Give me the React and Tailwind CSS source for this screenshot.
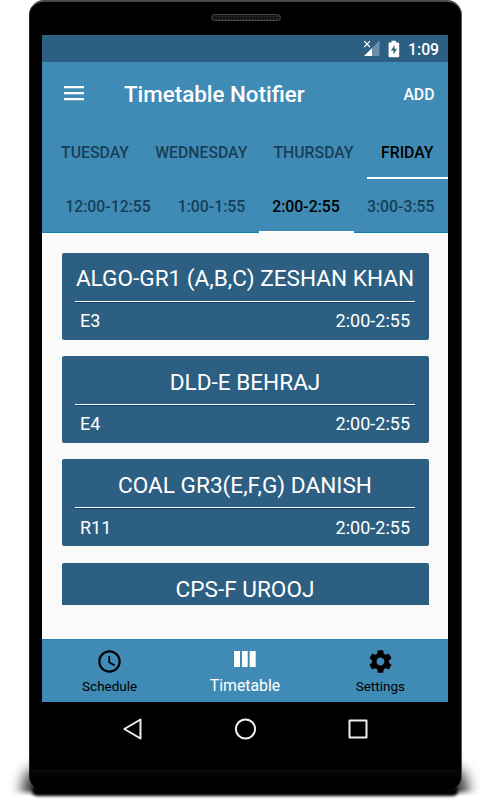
import React, { useState } from "react";
import clsx from "clsx";

const days = [
  { label: "TUESDAY", size: "w-[94px]" },
  { label: "WEDNESDAY", size: "w-[118.5px]" },
  { label: "THURSDAY", size: "w-[106px]" },
  { label: "FRIDAY", size: "w-[81.5px]" },
];

const slots = [
  { label: "12:00-12:55", size: "w-[113px]" },
  { label: "1:00-1:55", size: "w-[94px]" },
  { label: "2:00-2:55", size: "w-[95px]" },
  { label: "3:00-3:55", size: "w-[94.5px]" },
];

const classes = [
  { title: "ALGO-GR1 (A,B,C) ZESHAN KHAN", room: "E3", time: "2:00-2:55" },
  { title: "DLD-E BEHRAJ", room: "E4", time: "2:00-2:55" },
  { title: "COAL GR3(E,F,G) DANISH", room: "R11", time: "2:00-2:55" },
  { title: "CPS-F UROOJ" },
];

function StatusBar() {
  return (
    <div className="flex h-[27px] shrink-0 items-center justify-end bg-[#2d5f82] pr-[9px] text-white">
      <svg width="17" height="17" viewBox="0 0 17 17" className="mr-[8px]">
        <path d="M16.5 0.5V16H9V8z" fill="#fff" fillOpacity=".3" />
        <path d="M1 16L9 8V16z" fill="#fff" />
        <path d="M1.2 1.2L7 7M7 1.2L1.2 7" stroke="#fff" strokeWidth="1.2" />
      </svg>
      <svg width="12" height="18" viewBox="0 0 12 18" className="mr-[8px]">
        <path d="M3.5 0.7h4.5v1.8h2.2q1 0 1 1V16.3q0 1-1 1H1.6q-1 0-1-1V3.5q0-1 1-1h1.9z" fill="#fff" />
        <path d="M6.8 5L2.9 10.6h2.6V14.5L9 8.8H6.4z" fill="#2d5f82" />
      </svg>
      <span className="w-[31px] pt-[2px] text-[15.8px] leading-none font-medium whitespace-nowrap">1:09</span>
    </div>
  );
}

function TabRow({ tabs, active, onSelect, className }) {
  return (
    <div className={clsx("flex h-[54px]", className)}>
      {tabs.map((tab) => (
        <button
          key={tab.label}
          onClick={() => onSelect(tab.label)}
          className={clsx(
            "flex shrink-0 items-center justify-center border-b-2 pt-[4px] text-[15.8px] font-medium whitespace-nowrap",
            tab.size,
            active === tab.label
              ? "border-white text-black"
              : "border-transparent text-[#173f56]"
          )}
        >
          {tab.label}
        </button>
      ))}
    </div>
  );
}

function ClassCard({ item }) {
  return (
    <div className="mb-[16.3px] h-[87px] shrink-0 rounded-[2px] bg-[#2d5f82] px-[13.5px] text-white">
      <div
        className={clsx(
          "flex h-[49px] items-center justify-center pt-[5px] text-[22.6px] whitespace-nowrap",
          item.room && "border-b border-white shadow-[0_1px_0_#123f6c]"
        )}
      >
        {item.title}
      </div>
      {item.room && (
        <div className="flex h-[38px] items-center justify-between px-[5px] text-[18px]">
          <span>{item.room}</span>
          <span>{item.time}</span>
        </div>
      )}
    </div>
  );
}

function BottomNav() {
  return (
    <div className="grid h-[63px] shrink-0 grid-cols-3 border-t border-[#2880aa] bg-[#408bb6] text-black">
      <div className="flex flex-col items-center pt-[8px]">
        <svg width="27" height="27" viewBox="0 0 24 24">
          <path
            d="M11.99 2C6.47 2 2 6.48 2 12s4.47 10 9.99 10C17.52 22 22 17.52 22 12S17.52 2 11.99 2zM12 20c-4.42 0-8-3.58-8-8s3.58-8 8-8 8 3.58 8 8-3.58 8-8 8zm.5-13H11v6l5.25 3.15.75-1.23-4.5-2.67z"
          />
        </svg>
        <span className="mt-[3px] text-[13.5px] leading-[16px]">Schedule</span>
      </div>
      <div className="flex flex-col items-center pt-[11px] text-white">
        <svg width="22" height="16" viewBox="0 0 22 16" fill="currentColor">
          <path d="M0 0h6v16H0zM8 0h5.7v16H8zM15.7 0h6v16h-6z" />
        </svg>
        <span className="mt-[10px] text-[15.8px] leading-[18px]">Timetable</span>
      </div>
      <div className="flex flex-col items-center pt-[8px]">
        <svg width="27" height="27" viewBox="0 0 24 24">
          <path d="M19.43 12.98c.04-.32.07-.64.07-.98s-.03-.66-.07-.98l2.11-1.65c.19-.15.24-.42.12-.64l-2-3.46c-.12-.22-.39-.3-.61-.22l-2.49 1c-.52-.4-1.08-.73-1.69-.98l-.38-2.65C14.46 2.18 14.25 2 14 2h-4c-.25 0-.46.18-.49.42l-.38 2.65c-.61.25-1.17.59-1.69.98l-2.49-1c-.23-.09-.49 0-.61.22l-2 3.46c-.13.22-.07.49.12.64l2.11 1.65c-.04.32-.07.65-.07.98s.03.66.07.98l-2.11 1.65c-.19.15-.24.42-.12.64l2 3.46c.12.22.39.3.61.22l2.49-1c.52.4 1.08.73 1.69.98l.38 2.65c.03.24.24.42.49.42h4c.25 0 .46-.18.49-.42l.38-2.65c.61-.25 1.17-.59 1.69-.98l2.49 1c.23.09.49 0 .61-.22l2-3.46c.12-.22.07-.49-.12-.64l-2.11-1.65zM12 15.5c-1.93 0-3.5-1.57-3.5-3.5s1.57-3.5 3.5-3.5 3.5 1.57 3.5 3.5-1.57 3.5-3.5 3.5z" />
        </svg>
        <span className="mt-[3px] text-[13.5px] leading-[16px]">Settings</span>
      </div>
    </div>
  );
}

function SystemNav() {
  return (
    <div className="flex h-[67px] justify-between px-[79px] pt-[15px]">
      <svg width="24" height="24" viewBox="0 0 24 24" fill="none" stroke="#eee" strokeWidth="2" strokeLinejoin="round">
        <path d="M19.5 2.5V21.5L3.3 12z" />
      </svg>
      <svg width="24" height="24" viewBox="0 0 24 24" fill="none" stroke="#eee" strokeWidth="2">
        <circle cx="11.5" cy="12" r="9.6" />
      </svg>
      <svg width="24" height="24" viewBox="0 0 24 24" fill="none" stroke="#eee" strokeWidth="2" strokeLinejoin="round">
        <path d="M3.5 3.5h17v17h-17z" />
      </svg>
    </div>
  );
}

export default function App() {
  const [day, setDay] = useState("FRIDAY");
  const [slot, setSlot] = useState("2:00-2:55");

  return (
    <div className="relative h-[800px] w-[490px] overflow-hidden bg-white pl-[29px] font-['Roboto',sans-serif]">
      {/* soft shadow under the phone */}
      <div className="absolute top-[750px] left-[2px] h-[46px] w-[486px] overflow-hidden [mask-image:linear-gradient(to_bottom,black_85%,transparent)]">
        <div className="absolute top-[18px] left-[21px] h-[50px] w-[444px] rounded-[16px] bg-black/80 blur-[7px]" />
      </div>
      <div className="absolute top-[786px] left-[32px] h-[10px] w-[426px] rounded-full bg-black blur-[1.5px]" />

      <div className="relative h-[791px] w-[433px] overflow-hidden rounded-[15px] border-x border-t-2 border-t-[#494949] border-r-[#555] border-l-[#222] bg-black px-[12px]">
        <div className="flex h-[33px] justify-center pt-[12px]">
          <div className="h-[7px] w-[70px] rounded-full border border-[#464646] bg-[radial-gradient(#3a3a3a_1px,#151515_1px)] bg-[size:3px_3px]" />
        </div>

        <div className="flex h-[667px] w-[406px] flex-col overflow-hidden bg-[#fafafa]">
          <StatusBar />
          <div className="h-[171px] shrink-0 bg-[#408bb6] shadow-[inset_0_-1px_0_#1080ac]">
            <div className="flex h-[63px] items-center pr-[13.5px] pl-[22px] text-white">
              <svg width="20" height="15" viewBox="0 0 20 15" fill="currentColor">
                <path d="M0 0h20v2.3H0zM0 6h20v2.3H0zM0 12h20v2.3H0z" />
              </svg>
              <h1 className="ml-[40px] grow pt-[2px] text-[22.35px] font-medium whitespace-nowrap">Timetable Notifier</h1>
              <button className="pt-[2px] text-[15.8px] font-medium">ADD</button>
            </div>
            <TabRow tabs={days} active={day} onSelect={setDay} className="pl-[6px]" />
            <TabRow tabs={slots} active={slot} onSelect={setSlot} className="pl-[9.5px]" />
          </div>

          <div className="mx-[19.5px] mt-[19.7px] mb-[34px] flex min-h-0 grow flex-col overflow-hidden">
            {classes.map((item) => (
              <ClassCard key={item.title} item={item} />
            ))}
          </div>
          <BottomNav />
        </div>

        <SystemNav />
        <div className="-mx-[12px] h-[22px] bg-gradient-to-b from-[#090909] to-black" />
      </div>
    </div>
  );
}
